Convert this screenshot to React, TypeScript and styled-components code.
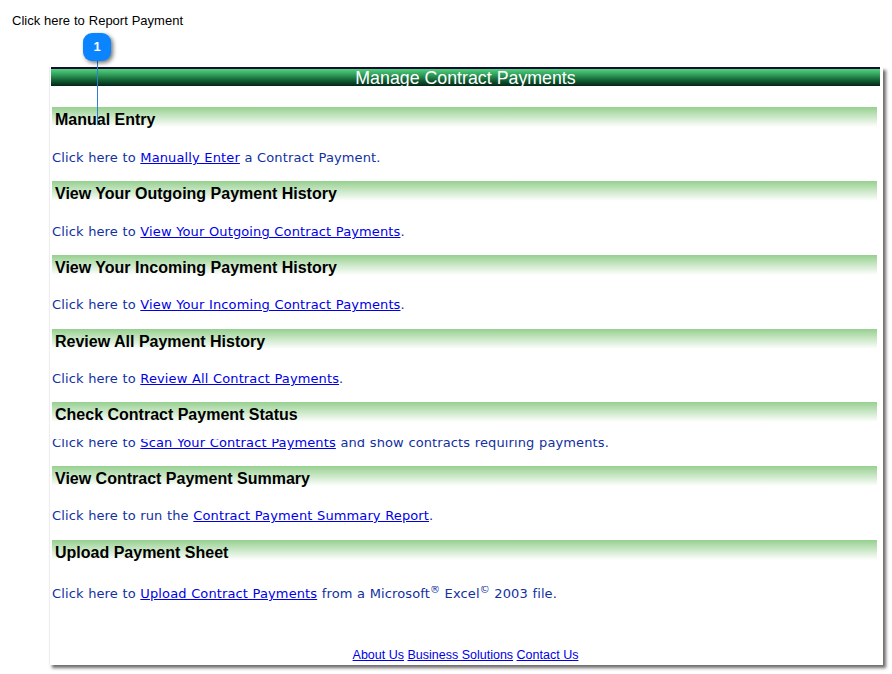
import React from "react";
import styled, { createGlobalStyle } from "styled-components";

const Global = createGlobalStyle`
  html, body { margin: 0; padding: 0; background: #fff; }
  body { width: 892px; height: 674px; overflow: hidden; font-family: "Liberation Sans", Arial, sans-serif; }
`;

const Page = styled.div`
  position: relative;
  width: 892px;
  height: 674px;
  padding: 13px 0 0 12px;
  box-sizing: border-box;
`;

const Caption = styled.div`
  font-size: 13px;
  line-height: 15px;
  color: #000;
  height: 54px;
  word-spacing: 0.3px;
`;

const Panel = styled.div`
  width: 834px;
  height: 598px;
  margin-left: 37px;
  box-sizing: border-box;
  padding: 0 3px 0 1px;
  background: #fff;
  border-left: 1px solid #eeeeee;
  box-shadow: 3px 3px 3px rgba(60, 60, 60, 0.75);
  display: flex;
  flex-direction: column;
`;

const TitleBar = styled.div`
  height: 19px;
  box-sizing: border-box;
  border-top: 2px solid #1a0a35;
  background: linear-gradient(#4fd47d 0%, #35a45f 30%, #0f5a30 70%, #04251a 100%);
  color: #fff;
  font-size: 17.8px;
  line-height: 18px;
  text-align: center;
  white-space: nowrap;
  flex: none;
`;

const Sections = styled.div`
  padding: 21px 3px 0 1px;
  display: flex;
  flex-direction: column;
  flex: 1;
`;

const Section = styled.section`
  display: flex;
  flex-direction: column;
`;

const Heading = styled.h2`
  margin: 0;
  height: 20px;
  padding-left: 3px;
  background: linear-gradient(#96d08f, #ffffff);
  font-size: 16px;
  font-weight: 700;
  line-height: 26px;
  color: #000;
  white-space: nowrap;
  flex: none;
`;

const Body = styled.div<{ $height: number; $textTop: number }>`
  height: ${(p) => p.$height}px;
  padding-top: ${(p) => p.$textTop}px;
  box-sizing: border-box;
  display: flex;
  flex-direction: column;
`;

const Clip = styled.div`
  flex: 1;
  overflow: hidden;
`;

const Line = styled.p<{ $shift?: number }>`
  margin: ${(p) => p.$shift ?? 0}px 0 0;
  font-family: "DejaVu Sans", Verdana, sans-serif;
  font-size: 13px;
  line-height: 16px;
  color: #12309f;
  white-space: nowrap;
  word-spacing: 0.3px;
  letter-spacing: 0.12px;
`;

const TextLink = styled.a`
  color: #0000e6;
  text-decoration: underline;
`;

const Sup = styled.sup`
  font-size: 10px;
  line-height: 0;
`;

const Footer = styled.div`
  margin-top: auto;
  height: 18px;
  text-align: center;
  font-size: 12.5px;
  line-height: 16px;
  padding-left: 2px;
  white-space: nowrap;
`;

const Badge = styled.div`
  position: absolute;
  left: 83px;
  top: 33px;
  width: 28px;
  height: 28px;
  border-radius: 9px;
  background: #0a84ff;
  color: #fff;
  font-size: 13px;
  font-weight: 700;
  line-height: 28px;
  text-align: center;
  box-shadow: 2px 2px 4px rgba(0, 0, 0, 0.55);
`;

const Leader = styled.div`
  position: absolute;
  left: 97px;
  top: 61px;
  width: 1px;
  height: 64px;
  background: #2a7fd8;
`;

const rows: { title: string; height: number; top: number; shift?: number; body: React.ReactNode }[] = [
  { title: "Manual Entry", height: 54, top: 23, body: <>Click here to <TextLink>Manually Enter</TextLink> a Contract Payment.</> },
  { title: "View Your Outgoing Payment History", height: 54, top: 23, body: <>Click here to <TextLink>View Your Outgoing Contract Payments</TextLink>.</> },
  { title: "View Your Incoming Payment History", height: 54, top: 22, body: <>Click here to <TextLink>View Your Incoming Contract Payments</TextLink>.</> },
  { title: "Review All Payment History", height: 53, top: 22, body: <>Click here to <TextLink>Review All Contract Payments</TextLink>.</> },
  { title: "Check Contract Payment Status", height: 44, top: 17, shift: -4, body: <>Click here to <TextLink>Scan Your Contract Payments</TextLink> and show contracts requiring payments.</> },
  { title: "View Contract Payment Summary", height: 54, top: 22, body: <>Click here to run the <TextLink>Contract Payment Summary Report</TextLink>.</> },
  { title: "Upload Payment Sheet", height: 60, top: 26, body: <>Click here to <TextLink>Upload Contract Payments</TextLink> from a Microsoft<Sup>®</Sup> Excel<Sup>©</Sup> 2003 file.</> },
];

export default function App() {
  return (
    <>
      <Global />
      <Page>
        <Caption>Click here to Report Payment</Caption>
        <Panel>
          <TitleBar>Manage Contract Payments</TitleBar>
          <Sections>
            {rows.map((r) => (
              <Section key={r.title}>
                <Heading>{r.title}</Heading>
                <Body $height={r.height} $textTop={r.top}>
                  <Clip>
                    <Line $shift={r.shift}>{r.body}</Line>
                  </Clip>
                </Body>
              </Section>
            ))}
            <Footer>
              <TextLink>About Us</TextLink> <TextLink>Business Solutions</TextLink> <TextLink>Contact Us</TextLink>
            </Footer>
          </Sections>
        </Panel>
        <Leader />
        <Badge>1</Badge>
      </Page>
    </>
  );
}
